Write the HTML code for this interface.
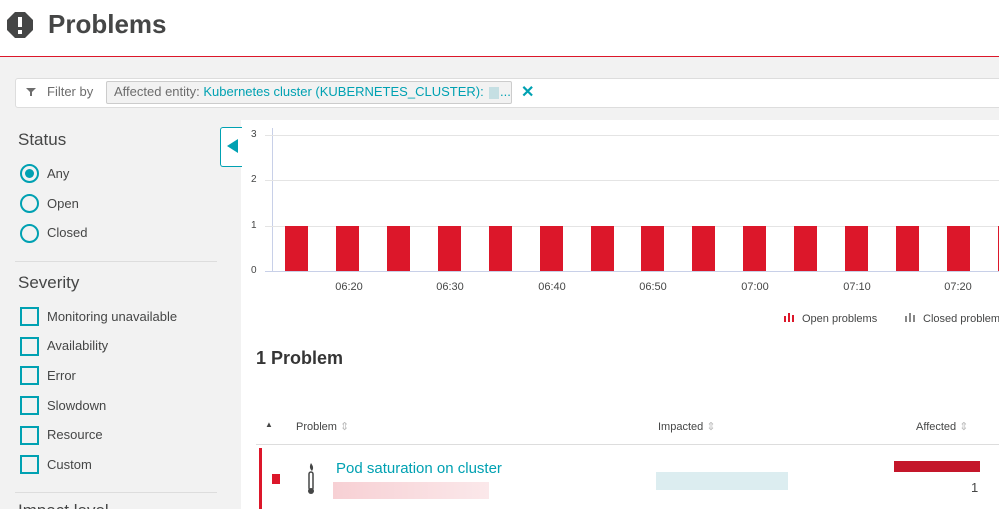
<!DOCTYPE html>
<html style="width:999px;height:509px;overflow:hidden"><head><style>
*{margin:0;padding:0;box-sizing:border-box}
body{width:999px;height:509px;overflow:hidden;background:#f2f2f2;font-family:"Liberation Sans",sans-serif;color:#454646;position:relative}
#w{position:relative;width:999px;height:509px;overflow:hidden}
.abs{position:absolute}
.t{font-size:13px;color:#454646}
.radio{width:19px;height:19px;border:2px solid #00a1b2;border-radius:50%;position:absolute;left:20px}
.cb{width:19px;height:19px;border:2px solid #00a1b2;position:absolute;left:20px}
.bar{position:absolute;top:226px;height:45px;width:23px;background:#dc172a}
.xl{position:absolute;top:281px;font-size:11px;color:#454646;width:40px;text-align:center}
</style></head><body><div id="w">
<div class="abs" style="left:0;top:0;width:999px;height:56px;background:#fff"></div>
<div class="abs" style="left:0;top:56px;width:999px;height:1px;background:#dc172a"></div>
<svg class="abs" style="left:7px;top:12px" width="26" height="26" viewBox="0 0 26 26"><polygon points="8,0 18,0 26,8 26,18 18,26 8,26 0,18 0,8" fill="#454646"/><rect x="11" y="5" width="4" height="10" fill="#fff"/><rect x="11" y="18" width="4" height="4" fill="#fff"/></svg>
<div class="abs" style="left:48px;top:9px;font-size:26px;font-weight:bold;color:#454646">Problems</div>
<div class="abs" style="left:15px;top:78px;width:990px;height:30px;background:#fff;border:1px solid #ddd;border-radius:3px"></div>
<svg class="abs" style="left:25px;top:86px" width="12" height="12" viewBox="0 0 12 12"><path d="M1 2h10L7 6v4H5V6z" fill="#6d6d6d"/></svg>
<div class="abs t" style="left:47px;top:84px;color:#6d6d6d">Filter by</div>
<div class="abs" style="left:106px;top:81px;width:406px;height:23px;background:#f2f2f2;border:1px solid #ccc;border-radius:2px"></div>
<div class="abs t" style="left:114px;top:84px;color:#6d6d6d;white-space:nowrap">Affected entity: <span style="color:#00a1b2">Kubernetes cluster (KUBERNETES_CLUSTER):</span></div>
<div class="abs" style="left:489px;top:87px;width:10px;height:12px;background:#c5dfe3"></div>
<div class="abs t" style="left:500px;top:84px;color:#00a1b2">...</div>
<div class="abs" style="left:521px;top:82px;font-size:16px;font-weight:bold;color:#00a1b2">✕</div>
<div class="abs" style="left:241px;top:120px;width:758px;height:389px;background:#fff"></div>
<div class="abs" style="left:18px;top:130px;font-size:17px">Status</div>
<div class="radio" style="top:164px"><div style="width:9px;height:9px;border-radius:50%;background:#00a1b2;margin:3px"></div></div>
<div class="abs t" style="left:47px;top:166px">Any</div>
<div class="radio" style="top:194px"></div><div class="abs t" style="left:47px;top:196px">Open</div>
<div class="radio" style="top:224px"></div><div class="abs t" style="left:47px;top:225px">Closed</div>
<div class="abs" style="left:15px;top:261px;width:202px;height:1px;background:#ddd"></div>
<div class="abs" style="left:18px;top:273px;font-size:17px">Severity</div>
<div class="cb" style="top:307px"></div><div class="abs t" style="left:47px;top:309px">Monitoring unavailable</div>
<div class="cb" style="top:337px"></div><div class="abs t" style="left:47px;top:338px">Availability</div>
<div class="cb" style="top:366px"></div><div class="abs t" style="left:47px;top:368px">Error</div>
<div class="cb" style="top:396px"></div><div class="abs t" style="left:47px;top:398px">Slowdown</div>
<div class="cb" style="top:426px"></div><div class="abs t" style="left:47px;top:427px">Resource</div>
<div class="cb" style="top:455px"></div><div class="abs t" style="left:47px;top:457px">Custom</div>
<div class="abs" style="left:15px;top:492px;width:202px;height:1px;background:#ddd"></div>
<div class="abs" style="left:18px;top:501px;font-size:17px;line-height:20px;height:8px;overflow:hidden">Impact level</div>
<div class="abs" style="left:220px;top:127px;width:22px;height:40px;background:#fff;border:1px solid #00a1b2;border-right:none;border-radius:3px 0 0 3px"></div>
<div class="abs" style="left:227px;top:139px;width:0;height:0;border-top:7px solid transparent;border-bottom:7px solid transparent;border-right:11px solid #00a1b2"></div>
<div class="abs" style="left:272px;top:128px;width:1px;height:144px;background:#c8d0e8"></div>
<div class="abs" style="left:265px;top:135px;width:734px;height:1px;background:#e4e4e4"></div>
<div class="abs" style="left:265px;top:180px;width:734px;height:1px;background:#e4e4e4"></div>
<div class="abs" style="left:265px;top:226px;width:734px;height:1px;background:#e4e4e4"></div>
<div class="abs" style="left:265px;top:271px;width:734px;height:1px;background:#c8d0e8"></div>
<div class="abs" style="left:251px;top:129px;font-size:10px">3</div>
<div class="abs" style="left:251px;top:174px;font-size:10px">2</div>
<div class="abs" style="left:251px;top:220px;font-size:10px">1</div>
<div class="abs" style="left:251px;top:265px;font-size:10px">0</div>
<div class="bar" style="left:285px"></div><div class="bar" style="left:336px"></div><div class="bar" style="left:387px"></div><div class="bar" style="left:438px"></div><div class="bar" style="left:489px"></div><div class="bar" style="left:540px"></div><div class="bar" style="left:591px"></div><div class="bar" style="left:641px"></div><div class="bar" style="left:692px"></div><div class="bar" style="left:743px"></div><div class="bar" style="left:794px"></div><div class="bar" style="left:845px"></div><div class="bar" style="left:896px"></div><div class="bar" style="left:947px"></div><div class="bar" style="left:998px"></div>
<div class="xl" style="left:329px">06:20</div><div class="xl" style="left:430px">06:30</div><div class="xl" style="left:532px">06:40</div><div class="xl" style="left:633px">06:50</div><div class="xl" style="left:735px">07:00</div><div class="xl" style="left:837px">07:10</div><div class="xl" style="left:938px">07:20</div>
<svg class="abs" style="left:783px;top:312px" width="14" height="11"><rect x="1" y="4" width="2" height="6" fill="#dc172a"/><rect x="5" y="1" width="2" height="9" fill="#dc172a"/><rect x="9" y="3" width="2" height="7" fill="#dc172a"/></svg>
<div class="abs" style="left:802px;top:313px;font-size:11px">Open problems</div>
<svg class="abs" style="left:904px;top:312px" width="14" height="11"><rect x="1" y="4" width="2" height="6" fill="#888"/><rect x="5" y="1" width="2" height="9" fill="#888"/><rect x="9" y="3" width="2" height="7" fill="#888"/></svg>
<div class="abs" style="left:923px;top:313px;font-size:11px;white-space:nowrap">Closed problems</div>
<div class="abs" style="left:256px;top:348px;font-size:18px;font-weight:bold;color:#353535">1 Problem</div>
<div class="abs" style="left:265px;top:420px;font-size:8px">▲</div>
<div class="abs" style="left:296px;top:420px;font-size:11px">Problem <span style="color:#bbb">⇕</span></div>
<div class="abs" style="left:658px;top:420px;font-size:11px">Impacted <span style="color:#bbb">⇕</span></div>
<div class="abs" style="left:916px;top:420px;font-size:11px">Affected <span style="color:#bbb">⇕</span></div>
<div class="abs" style="left:256px;top:444px;width:743px;height:1px;background:#ddd"></div>
<div class="abs" style="left:259px;top:448px;width:3px;height:61px;background:#dc172a"></div>
<div class="abs" style="left:272px;top:474px;width:8px;height:10px;background:#dc172a"></div>
<svg class="abs" style="left:304px;top:462px" width="14" height="34" viewBox="0 0 14 34"><path d="M7 1c2 3 3 5 1 8-2-2-3-4-1-8z" fill="#454646"/><rect x="5" y="10" width="4" height="18" rx="2" fill="none" stroke="#454646" stroke-width="1.5"/><circle cx="7" cy="29" r="3" fill="#454646"/></svg>
<div class="abs" style="left:336px;top:460px;font-size:15px;color:#00a1b2">Pod saturation on cluster</div>
<div class="abs" style="left:333px;top:482px;width:156px;height:17px;background:linear-gradient(90deg,#f7d0d4,#fbe8ea)"></div>
<div class="abs" style="left:656px;top:472px;width:132px;height:18px;background:#dcedf0"></div>
<div class="abs" style="left:894px;top:461px;width:86px;height:11px;background:#c4162a"></div>
<div class="abs" style="left:971px;top:480px;font-size:13px">1</div>
</div></body></html>
